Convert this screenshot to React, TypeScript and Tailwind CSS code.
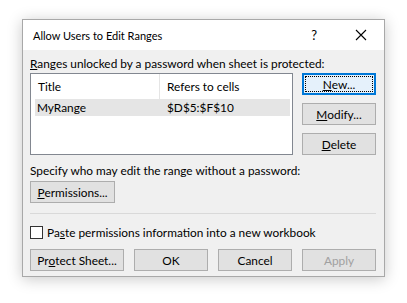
import React from "react";

const font = "font-['Lato',sans-serif] text-[11.85px] leading-[15px] text-black";

function Btn({ children, w = "w-[74px]", focus = false, disabled = false }: { children: React.ReactNode; w?: string; focus?: boolean; disabled?: boolean }) {
  if (focus) {
    return (
      <div className={`${w} h-[22px] border-2 border-[#0078d7] bg-[#e5f1fb] p-[1px] flex`}>
        <div className="flex-1 border border-dotted border-black flex items-center justify-center">{children}</div>
      </div>
    );
  }
  return (
    <div className={`${w} h-[22px] border border-[#adadad] bg-[#e1e1e1] flex items-center justify-center ${disabled ? "text-[#a0a0a0]" : ""}`}>
      {children}
    </div>
  );
}

export default function App() {
  return (
    <div className={`w-[407px] h-[303px] bg-white pt-[19px] pl-[22px] ${font}`}>
      <div className="w-[363px] h-[258px] border border-[#a8a8a8] bg-[#f0f0f0] shadow-[0_2px_14px_rgba(0,0,0,0.22)] flex flex-col">
        <div className="h-[30px] bg-white flex items-center pl-[10px] pr-[17px]">
          <span className="flex-1 text-[11px]">Allow Users to Edit Ranges</span>
          <span className="mr-[38px] text-[13px]">?</span>
          <svg width="12" height="12" viewBox="0 0 12 12"><path d="M1 1L11 11M11 1L1 11" stroke="#000" strokeWidth="1.1" /></svg>
        </div>
        <div className="flex-1 pl-[7px] pr-[7px] flex flex-col">
          <div className="mt-[6px] h-[15px]"><u>R</u>anges unlocked by a password when sheet is protected:</div>
          <div className="mt-[2px] flex gap-[9px]">
            <div className="w-[263px] h-[82px] border border-[#828790] bg-white flex flex-col">
              <div className="h-[25px] flex">
                <div className="w-[129px] border-r border-[#e5e5e5] flex items-center pl-[7px]">Title</div>
                <div className="flex-1 flex items-center pl-[7px]">Refers to cells</div>
              </div>
              <div className="h-[17px] ml-[4px] mr-[2px] bg-[#e5e5e5] flex items-center">
                <div className="w-[125px] pl-[2px]">MyRange</div>
                <div className="pl-[7px]">$D$5:$F$10</div>
              </div>
            </div>
            <div className="flex flex-col gap-[8px]">
              <Btn focus><u>N</u>ew...</Btn>
              <Btn><u>M</u>odify...</Btn>
              <Btn><u>D</u>elete</Btn>
            </div>
          </div>
          <div className="mt-[8px] h-[15px]">Specify who may edit the range without a password:</div>
          <div className="mt-[3px]"><Btn w="w-[85px]"><u>P</u>ermissions...</Btn></div>
          <div className="mt-[10px] h-px bg-[#d9d9d9] w-[346px]" />
          <div className="mt-[11px] flex items-center gap-[4px]">
            <div className="w-[13px] h-[13px] border border-[#333] bg-white" />
            <span>Pa<u>s</u>te permissions information into a new workbook</span>
          </div>
          <div className="mt-[9px] flex gap-[10px]">
            <Btn w="w-[94px]">Pr<u>o</u>tect Sheet...</Btn>
            <Btn>OK</Btn>
            <Btn>Cancel</Btn>
            <Btn disabled>Apply</Btn>
          </div>
        </div>
      </div>
    </div>
  );
}
